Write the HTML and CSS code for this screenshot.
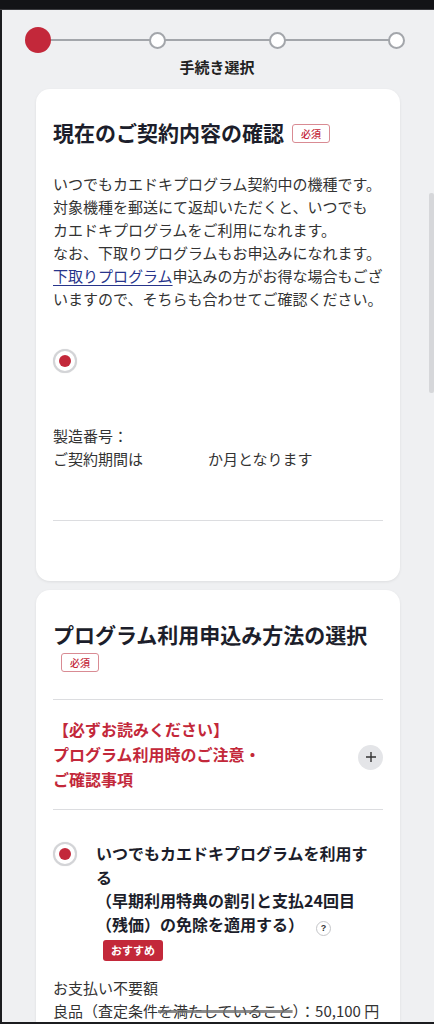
FILE: index.html
```html
<!DOCTYPE html>
<html lang="ja">
<head>
<meta charset="utf-8">
<title>手続き選択</title>
<link rel="stylesheet" href="styles.css">
</head>
<body>
<div class="page">
  <div class="topbar"></div>
  <div class="stepper">
    <div class="node"><span class="dot-now"></span></div>
    <div class="node"><span class="dot"></span></div>
    <div class="node"><span class="dot"></span></div>
    <div class="node"><span class="dot"></span></div>
  </div>
  <div class="step-label">手続き選択</div>

  <section class="card card-first">
    <h2 class="card-title">現在のご契約内容の確認<span class="req">必須</span></h2>
    <p class="desc">いつでもカエドキプログラム契約中の機種です。<br>対象機種を郵送にて返却いただくと、いつでも<br>カエドキプログラムをご利用になれます。<br>なお、下取りプログラムもお申込みになれます。<br><a class="link" href="#">下取りプログラム</a>申込みの方がお得な場合もござ<br>いますので、そちらも合わせてご確認ください。</p>
    <div class="radio"></div>
    <p class="info">製造番号：<br>ご契約期間は<span class="blank"></span>か月となります</p>
    <div class="rule rule-end"></div>
  </section>

  <section class="card card-second">
    <h2 class="card-title">プログラム利用申込み方法の選択<span class="req">必須</span></h2>
    <div class="rule rule-top"></div>
    <div class="notice">
      <p class="notice-text">【必ずお読みください】<br>プログラム利用時のご注意・<br>ご確認事項</p>
      <span class="plus"><svg width="12" height="12" viewBox="0 0 12 12"><path d="M6 1v10M1 6h10" stroke="#333" stroke-width="1.4" fill="none"/></svg></span>
    </div>
    <div class="rule"></div>
    <div class="option">
      <div class="radio radio-inline"></div>
      <div class="option-body">
        <p class="option-text">いつでもカエドキプログラムを利用す<br>る<br>（早期利用特典の割引と支払24回目<br>（残価）の免除を適用する）<span class="help">?</span></p>
        <span class="rec">おすすめ</span>
      </div>
    </div>
    <p class="pay">お支払い不要額<br>良品（査定条件<span class="smudge">を満たしていること</span>）：50,100&nbsp;円</p>
  </section>
</div>
<div class="scrollbar"></div>
<div class="bottombar"></div>
</body>
</html>
```
FILE: styles.css
```css
* { box-sizing: border-box; margin: 0; padding: 0; }
html, body { background: #eff0f2; }
body {
  font-family: "Noto Sans CJK JP", "Noto Sans", sans-serif;
  color: #333;
  width: 434px;
  height: 1024px;
  overflow: hidden;
}
.page {
  min-height: 1024px;
  box-shadow: inset 2px 0 0 #1b1c1f;
}
.topbar { height: 10px; background: #131417; border-bottom: 1px solid #3a3b3f; }

.stepper {
  margin: 17px 24px 0 25px;
  height: 26px;
  display: flex;
  justify-content: space-between;
  align-items: center;
  background: linear-gradient(#a3a6ab, #a3a6ab) no-repeat center / calc(100% - 26px) 2px;
}
.node { width: 26px; height: 26px; display: flex; align-items: center; justify-content: center; }
.dot-now { width: 26px; height: 26px; border-radius: 50%; background: #c3283a; }
.dot { width: 17px; height: 17px; border-radius: 50%; background: #fff; border: 2px solid #a3a6ab; }
.step-label {
  text-align: center;
  font-weight: 700;
  font-size: 15px;
  line-height: 20px;
  margin-top: 4px;
  color: #222;
}

.card {
  background: #fff;
  border-radius: 14px;
  margin: 12px 34px 0 36px;
  padding: 30px 17px;
  box-shadow: 0 1px 3px rgba(0, 0, 0, 0.08);
}
.card-second { margin-top: 9px; padding-top: 31px; }
.card-title {
  font-size: 21px;
  font-weight: 700;
  line-height: 27px;
  color: #1c1e2b;
}
.req {
  display: inline-block;
  vertical-align: middle;
  margin-left: 8px;
  margin-top: -3px;
  font-size: 10px;
  line-height: 17px;
  padding: 0 8px;
  border: 1px solid #d98b93;
  border-radius: 3px;
  color: #c3283a;
  font-weight: 500;
}
.desc { margin-top: 26px; font-size: 15px; line-height: 23px; white-space: nowrap; }
.link { color: #27348b; text-decoration: underline; text-underline-offset: 3px; }

.radio {
  width: 24px;
  height: 24px;
  border-radius: 50%;
  border: 2px solid #d3d4d7;
  background: #fff;
  display: flex;
  align-items: center;
  justify-content: center;
  margin-top: 39px;
  box-shadow: 0 0 1px rgba(0,0,0,0.15);
  flex: none;
}
.radio::after { content: ""; width: 12px; height: 12px; border-radius: 50%; background: #c3283a; }
.radio-inline { margin-top: 0; }

.info { margin-top: 51px; font-size: 15px; line-height: 23px; }
.blank { display: inline-block; width: 65px; }

.rule { height: 1px; background: #dcdde0; }
.rule-end { margin-top: 50px; margin-bottom: 30px; }
.rule-top { margin-top: 24px; }

.notice {
  display: flex;
  align-items: center;
  justify-content: space-between;
  padding: 17px 0;
}
.notice-text { font-size: 16px; font-weight: 700; line-height: 25px; color: #c3283a; }
.plus {
  width: 25px; height: 25px; border-radius: 50%;
  background: #e4e5e8;
  display: flex; align-items: center; justify-content: center;
  margin-top: 5px;
}

.option { display: flex; gap: 19px; margin-top: 32px; }
.option-body { flex: 1; }
.option-text { font-size: 16px; font-weight: 700; line-height: 23.5px; color: #1c1e2b; }
.help {
  display: inline-flex;
  align-items: center;
  justify-content: center;
  width: 15px; height: 15px;
  border-radius: 50%;
  border: 1px solid #c4c5c8;
  font-size: 9px;
  line-height: 1;
  color: #333;
  margin-left: 12px;
  vertical-align: 0px;
  font-family: "Liberation Sans", sans-serif;
}
.rec {
  display: inline-block;
  margin: 4px 0 0 7px;
  padding: 0 8px;
  font-size: 11px;
  line-height: 21px;
  font-weight: 700;
  color: #fff;
  background: #c3283a;
  border-radius: 3px;
}
.pay { margin-top: 15px; font-size: 15px; line-height: 23px; white-space: nowrap; }
.smudge { text-decoration: line-through; text-decoration-color: rgba(110,110,110,0.8); text-decoration-thickness: 3px; }

.scrollbar {
  position: fixed;
  right: 0;
  top: 193px;
  width: 5px;
  height: 200px;
  background: #d6d7da;
  border-radius: 2px;
}
.bottombar {
  position: fixed;
  left: 0; right: 0; bottom: 0;
  height: 2px;
  background: #1b1c1f;
}
```
